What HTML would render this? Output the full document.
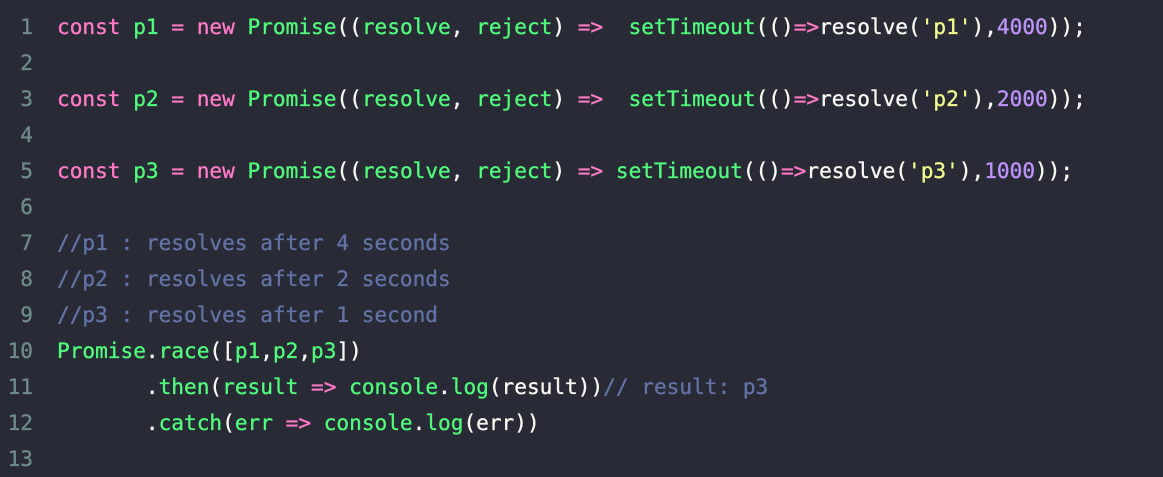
<!DOCTYPE html>
<html><head><meta charset="utf-8"><style>
html,body{margin:0;padding:0;background:#282a36;width:1163px;height:477px;overflow:hidden}
.w{position:absolute;left:0;top:9px;font-family:"DejaVu Sans Mono","Liberation Mono",monospace;font-size:21.1px;line-height:36px;color:#f8f8f2;-webkit-text-stroke:0.35px currentColor}
.l{display:flex;height:36px;white-space:pre}
.n{width:33px;text-align:right;color:#6d8a88;margin-right:24px;flex:none}
.k{color:#ff79c6}.g{color:#50fa7b}.y{color:#f1fa8c}.p{color:#bd93f9}.c{color:#6272a4}
</style></head><body><div class="w">
<div class="l"><span class="n">1</span><span><span class="k">const</span> <span class="g">p1</span> <span class="k">=</span> <span class="k">new</span> <span class="g">Promise</span>((<span class="g">resolve</span>, <span class="g">reject</span>) <span class="k">=&gt;</span>  <span class="g">setTimeout</span>(()<span class="k">=&gt;</span>resolve(<span class="y">'p1'</span>),<span class="p">4000</span>));</span></div>
<div class="l"><span class="n">2</span></div>
<div class="l"><span class="n">3</span><span><span class="k">const</span> <span class="g">p2</span> <span class="k">=</span> <span class="k">new</span> <span class="g">Promise</span>((<span class="g">resolve</span>, <span class="g">reject</span>) <span class="k">=&gt;</span>  <span class="g">setTimeout</span>(()<span class="k">=&gt;</span>resolve(<span class="y">'p2'</span>),<span class="p">2000</span>));</span></div>
<div class="l"><span class="n">4</span></div>
<div class="l"><span class="n">5</span><span><span class="k">const</span> <span class="g">p3</span> <span class="k">=</span> <span class="k">new</span> <span class="g">Promise</span>((<span class="g">resolve</span>, <span class="g">reject</span>) <span class="k">=&gt;</span> <span class="g">setTimeout</span>(()<span class="k">=&gt;</span>resolve(<span class="y">'p3'</span>),<span class="p">1000</span>));</span></div>
<div class="l"><span class="n">6</span></div>
<div class="l"><span class="n">7</span><span class="c">//p1 : resolves after 4 seconds</span></div>
<div class="l"><span class="n">8</span><span class="c">//p2 : resolves after 2 seconds</span></div>
<div class="l"><span class="n">9</span><span class="c">//p3 : resolves after 1 second</span></div>
<div class="l"><span class="n">10</span><span><span class="g">Promise</span>.<span class="g">race</span>([<span class="g">p1</span>,<span class="g">p2</span>,<span class="g">p3</span>])</span></div>
<div class="l"><span class="n">11</span><span>       .<span class="g">then</span>(<span class="g">result</span> <span class="k">=&gt;</span> <span class="g">console</span>.<span class="g">log</span>(result))<span class="c">// result: p3</span></span></div>
<div class="l"><span class="n">12</span><span>       .<span class="g">catch</span>(<span class="g">err</span> <span class="k">=&gt;</span> <span class="g">console</span>.<span class="g">log</span>(err))</span></div>
<div class="l"><span class="n">13</span></div>
</div></body></html>
